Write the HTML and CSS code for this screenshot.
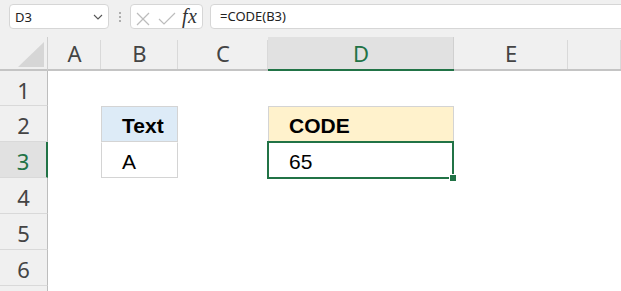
FILE: index.html
```html
<!DOCTYPE html>
<html>
<head>
<meta charset="utf-8">
<link rel="stylesheet" href="styles.css">
</head>
<body>
<div class="app">
  <div class="toolbar">
    <div class="namebox">
      <span>D3</span>
      <svg class="chev" width="10" height="6" viewBox="0 0 10 6"><polyline points="1,1 5,5 9,1" fill="none" stroke="#555" stroke-width="1.1"/></svg>
    </div>
    <div class="dots"><i></i><i></i><i></i></div>
    <div class="fxbox">
      <svg width="48" height="23" viewBox="0 0 48 23">
        <line x1="6" y1="8" x2="18" y2="20" stroke="#bcbcbc" stroke-width="1.2"/>
        <line x1="18" y1="8" x2="6" y2="20" stroke="#bcbcbc" stroke-width="1.2"/>
        <polyline points="28,14 33,19 44,8" fill="none" stroke="#bcbcbc" stroke-width="1.2"/>
      </svg>
      <span class="fx">fx</span>
    </div>
    <div class="formula">=CODE(B3)</div>
  </div>
  <div class="sheet">
    <div class="corner"><svg width="47" height="32" viewBox="0 0 47 32"><polygon points="44,5 44,30 18,30" fill="#d6d6d6"/></svg></div>
    <div class="ch">A</div>
    <div class="ch">B</div>
    <div class="ch">C</div>
    <div class="ch sel">D</div>
    <div class="ch">E</div>
    <div class="ch"></div>

    <div class="rh">1</div>
    <div class="c"></div><div class="c"></div><div class="c"></div><div class="c"></div><div class="c"></div><div class="c"></div>

    <div class="rh">2</div>
    <div class="c"></div>
    <div class="c t head blue">Text</div>
    <div class="c"></div>
    <div class="c t head gold">CODE</div>
    <div class="c"></div><div class="c"></div>

    <div class="rh sel">3</div>
    <div class="c"></div>
    <div class="c t body">A</div>
    <div class="c"></div>
    <div class="c t body active">65</div>
    <div class="c"></div><div class="c"></div>

    <div class="rh">4</div>
    <div class="c"></div><div class="c"></div><div class="c"></div><div class="c"></div><div class="c"></div><div class="c"></div>

    <div class="rh">5</div>
    <div class="c"></div><div class="c"></div><div class="c"></div><div class="c"></div><div class="c"></div><div class="c"></div>

    <div class="rh">6</div>
    <div class="c"></div><div class="c"></div><div class="c"></div><div class="c"></div><div class="c"></div><div class="c"></div>

    <div class="rh"></div>
    <div class="c"></div><div class="c"></div><div class="c"></div><div class="c"></div><div class="c"></div><div class="c"></div>
  </div>
</div>
</body>
</html>
```
FILE: styles.css
```css
* { box-sizing: border-box; margin: 0; padding: 0; }
html, body { width: 621px; height: 291px; overflow: hidden; background: #fff; }
.app { width: 621px; height: 291px; overflow: hidden; font-family: "Noto Sans", sans-serif; }

.toolbar {
  height: 37px;
  background: #f0f0f0;
  display: flex;
  align-items: flex-start;
  padding: 4px 0 0 9px;
}
.namebox {
  width: 100px; height: 25px;
  background: #fff;
  border: 1px solid #d6d6d6;
  border-radius: 4px;
  display: flex; align-items: center; justify-content: space-between;
  padding: 0 5px 0 5px;
  font-size: 13px; color: #222;
}
.chev { margin-top: 1px; }
.dots {
  width: 21px; height: 25px;
  display: flex; flex-direction: column; align-items: center; justify-content: center;
  gap: 2px;
}
.dots i { display: block; width: 2px; height: 2px; background: #999; border-radius: 1px; }
.fxbox {
  width: 73px; height: 25px;
  background: #fff;
  border: 1px solid #d6d6d6;
  border-radius: 4px;
  display: flex; align-items: flex-start;
}
.fx {
  font-family: "Liberation Serif", serif;
  font-style: italic;
  font-size: 20px;
  line-height: 22px;
  color: #333;
  margin-left: 3px;
  letter-spacing: 0.5px;
}
.formula {
  flex: 1;
  height: 25px;
  margin-left: 7px;
  margin-right: -8px;
  background: #fff;
  border: 1px solid #d6d6d6;
  border-radius: 4px;
  padding-left: 9px;
  font-size: 13px; line-height: 22px; color: #222;
}

.sheet {
  display: grid;
  grid-template-columns: 48px 53px 77px 90px 186px 114px 53px;
  grid-template-rows: 34px 35px repeat(6, 36px);
  background: #fff;
}
.corner {
  background: #f0f0f0;
  border-right: 1px solid #cfcfcf;
  border-bottom: 2px solid #c4c4c4;
}
.corner svg { display: block; }
.ch {
  background: linear-gradient(#d9d9d9, #d9d9d9) right 3px / 1px calc(100% - 3px) no-repeat, #f0f0f0;
  border-bottom: 2px solid #c4c4c4;
  font-size: 22px; color: #444;
  display: flex; align-items: center; justify-content: center;
}
.ch.sel {
  background: linear-gradient(#d0d0d0, #d0d0d0) right 0 / 1px 100% no-repeat, #e1e1e1;
  color: #217346;
  border-bottom-color: #217346;
}
.rh {
  background: #f0f0f0;
  border-right: 1px solid #bdbdbd;
  border-bottom: 1px solid #d9d9d9;
  font-size: 22px; color: #444;
  display: flex; align-items: center; justify-content: center;
  padding-top: 3px;
}
.rh.sel {
  background: #e1e1e1;
  color: #217346;
  border-right: 2px solid #217346;
}
.c { background: #fff; }
.t {
  font-family: "Liberation Sans", Arial, sans-serif;
  font-size: 21px;
  line-height: 30px;
  padding: 4px 0 0 20px;
  color: #000;
  border: 1px solid #d4d4d4;
  white-space: nowrap;
}
.head { font-weight: bold; }
.body { border-top-color: transparent; }
.blue { background: #ddebf7; }
.gold { background: #fff2cc; }
.active { position: relative; z-index: 1; }
.active::after {
  content: "";
  position: absolute;
  left: -2px; top: -2px; right: -1px; bottom: -2px;
  border: 2px solid #217346;
}
.active::before {
  content: "";
  position: absolute;
  right: -3px; bottom: -4px;
  width: 6px; height: 6px;
  background: #217346;
  border-top: 1px solid #fff;
  border-left: 1px solid #fff;
  z-index: 2;
}
```
